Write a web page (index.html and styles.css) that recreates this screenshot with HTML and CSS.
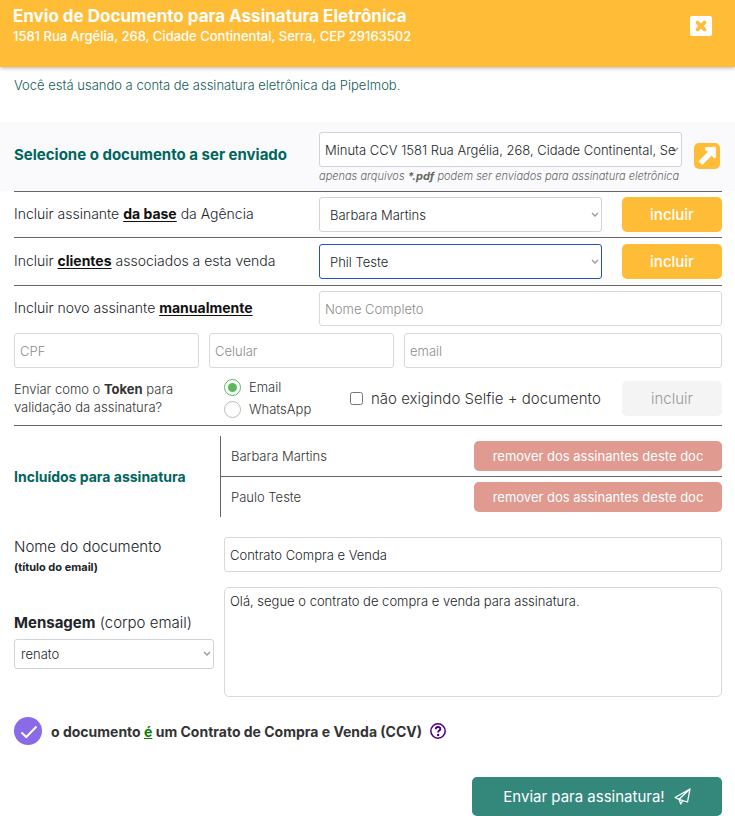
FILE: index.html
```html
<!DOCTYPE html>
<html lang="pt-BR">
<head>
    <meta charset="UTF-8">
    <meta name="viewport" content="width=device-width, initial-scale=1.0">
    <title>Envio de Documento para Assinatura Eletrônica</title>
    <link rel="stylesheet" href="styles.css">
</head>
<body>
    <header class="header">
        <div>
            <h1>Envio de Documento para Assinatura Eletrônica</h1>
            <p>1581 Rua Argélia, 268, Cidade Continental, Serra, CEP 29163502</p>
        </div>
        <button type="button" class="close" aria-label="Fechar">
            <svg width="12" height="12" viewBox="0 0 12 12"><path d="M2.5 2.5l7 7M9.5 2.5l-7 7" stroke="currentColor" stroke-width="3.6" stroke-linecap="round"/></svg>
        </button>
    </header>

    <p class="notice">Você está usando a conta de assinatura eletrônica da PipeImob.</p>

    <form>
        <section class="document">
            <label for="documento" class="heading">Selecione o documento a ser enviado</label>
            <div class="document-field">
                <select id="documento" class="document-select">
                    <option>Minuta CCV 1581 Rua Argélia, 268, Cidade Continental, Serra, CEP 29163502</option>
                </select>
                <p class="hint">apenas arquivos <b>*.pdf</b> podem ser enviados para assinatura eletrônica</p>
            </div>
            <button type="button" class="open" aria-label="Abrir documento">
                <svg width="26" height="26" viewBox="0 0 26 26"><path d="M11.500 4.500L21.700 4.200V14.500L20 15L17.800 12.300L8.200 21.700L4.800 18.300L14.300 8.700L11.300 6.800Z" fill="currentColor" stroke="currentColor" stroke-width=".6" stroke-linejoin="round"/></svg>
            </button>
        </section>

        <section class="row">
            <label for="agencia">Incluir assinante <b class="mark">da base</b> da Agência</label>
            <select id="agencia"><option>Barbara Martins</option></select>
            <button type="button" class="add">incluir</button>
        </section>

        <section class="row row-tall">
            <label for="cliente">Incluir <b class="mark">clientes</b> associados a esta venda</label>
            <select id="cliente" class="active"><option>Phil Teste</option></select>
            <button type="button" class="add">incluir</button>
        </section>

        <section class="manual">
            <div class="manual-name">
                <label for="nome">Incluir novo assinante <b class="mark">manualmente</b></label>
                <input type="text" id="nome" placeholder="Nome Completo">
            </div>
            <div class="manual-data">
                <input type="text" placeholder="CPF" aria-label="CPF">
                <input type="tel" placeholder="Celular" aria-label="Celular">
                <input type="email" placeholder="email" aria-label="email">
            </div>
            <div class="manual-token">
                <p>Enviar como o <b>Token</b> para<br>validação da assinatura?</p>
                <div class="radios">
                    <label><input type="radio" name="token" checked>Email</label>
                    <label><input type="radio" name="token">WhatsApp</label>
                </div>
                <label class="selfie"><input type="checkbox">não exigindo Selfie + documento</label>
                <button type="button" class="add" disabled>incluir</button>
            </div>
        </section>

        <section class="signers">
            <h2 class="heading">Incluídos para assinatura</h2>
            <ul>
                <li>Barbara Martins <button type="button" class="remove">remover dos assinantes deste doc</button></li>
                <li>Paulo Teste <button type="button" class="remove">remover dos assinantes deste doc</button></li>
            </ul>
        </section>

        <section class="message">
            <label for="titulo" class="big">Nome do documento <b class="small">(título do email)</b></label>
            <input type="text" id="titulo" value="Contrato Compra e Venda">
            <div class="message-model">
                <label for="mensagem" class="big"><b>Mensagem</b> (corpo email)</label>
                <select class="model" aria-label="Modelo da mensagem"><option>renato</option></select>
            </div>
            <textarea id="mensagem">Olá, segue o contrato de compra e venda para assinatura.</textarea>
        </section>

        <div class="ccv">
            <input type="checkbox" id="ccv" checked>
            <label for="ccv">o documento <u>é</u> um Contrato de Compra e Venda (CCV)</label>
            <button type="button" class="help" aria-label="Ajuda">
                <svg width="16" height="16" viewBox="0 0 16 16" fill="none" stroke="currentColor"><circle cx="8" cy="8" r="7.200" stroke-width="1.500"/><path d="M5.700 6.300C5.800 3.300 10.500 3.400 10.300 6.100C10.200 7.700 8.100 7.500 8.100 9.400" stroke-width="1.900"/><circle cx="8.100" cy="11.900" r="1.200" fill="currentColor" stroke="none"/></svg>
            </button>
        </div>

        <div class="actions">
            <button type="submit" class="send">Enviar para assinatura!
                <svg width="17" height="17" viewBox="0 0 17 17" fill="none" stroke="currentColor" stroke-width="1.300" stroke-linejoin="round"><path d="M16 1L1 9.500L5 11.300L13.500 14L16 1L5 11.300L6.800 16L8.700 12.500"/></svg>
            </button>
        </div>
    </form>
</body>
</html>
```
FILE: styles.css
```css
* { margin: 0; padding: 0; box-sizing: border-box; }
body { background-color: white; color: #212529; font-family: Inter, "Open Sans", sans-serif; font-size: 14px; font-weight: 300; }
b { font-weight: 700; }
button { border: none; border-radius: 5px; font-family: inherit; cursor: pointer; }
svg { display: block; flex: none; }

input, select, textarea { width: 100%; min-width: 0; height: 35px; padding: 0 5px; border: 1px solid #d9d9d9; border-radius: 3px;
                          background-color: white; color: #212529; font-family: inherit; font-size: 13px; font-weight: 300; }
input::placeholder { color: #8c8c8c; }
select { appearance: none; padding: 0 10px; border-color: #ced4da;
         background-image: url("data:image/svg+xml,%3Csvg xmlns='http://www.w3.org/2000/svg' width='8' height='6'%3E%3Cpath d='M1 1L4 4L7 1' fill='none' stroke='%23999' stroke-width='1.300'/%3E%3C/svg%3E");
         background-repeat: no-repeat; background-position: right 2px center; }
select.active { border-color: #2450c0; }

.header { display: flex; justify-content: space-between; align-items: flex-start; padding: 6px 23px 21px 13px;
          background-color: #ffbc36; color: white; box-shadow: 0 1px 4px rgba(0, 0, 0, 0.3); }
.header h1 { font-size: 17px; line-height: 20px; font-weight: 700; }
.header p { font-size: 13px; line-height: 20px; font-weight: 500; }
.close { display: flex; align-items: center; justify-content: center; width: 22px; height: 20px; margin-top: 10px;
         border-radius: 2px; background-color: white; color: #ffbc36; }
.notice { padding: 8px 14px 27px; color: #125c56; font-size: 13px; line-height: 20px; }

.heading { color: #00665c; font-size: 14px; font-weight: 700; }
.mark { color: #111; text-decoration: underline; text-underline-offset: 2px; }

.document { display: grid; grid-template-columns: 305fr 363fr 40fr; padding: 10px 13px 6px 14px; background-color: #fafafc; }
.document .heading { align-self: center; padding-bottom: 8px; font-size: 15px; }
.document-select { padding: 0 5px; }
.hint { color: #666; font-size: 11px; line-height: 18px; font-style: italic; white-space: nowrap; }
.open { display: flex; align-items: center; justify-content: center; justify-self: end; align-self: center;
        width: 26px; height: 26px; margin: 0 2px 6px 0; background-color: #ffbc36; color: white; }

.row, .manual, .signers { margin: 0 13px 0 14px; border-top: 1px solid #666; }
.row { display: grid; grid-template-columns: 305fr 283fr 120fr; align-items: center; padding: 5px 0; }
.row-tall { padding: 6px 0; }
.row label, .manual-name label { padding-bottom: 2px; }
.add { justify-self: end; width: 100px; height: 35px; background-color: #ffbc36; color: white; font-size: 15px; font-weight: 500; }
.add:disabled { background-color: #f4f4f4; color: #999; font-weight: 300; cursor: default; }

.manual { padding: 5px 0 6px; }
.manual-name { display: grid; grid-template-columns: 305fr 403fr; align-items: center; }
.manual-data { display: grid; grid-template-columns: 185fr 185fr 318fr; gap: 10px; margin-top: 7px; }
.manual-token { display: grid; grid-template-columns: 210fr 126fr 272fr 100px; align-items: center; margin-top: 9px; color: #333; }
.manual-token p { font-size: 13px; line-height: 18px; }
.radios { display: grid; gap: 2px; font-size: 13px; line-height: 20px; }
.radios label, .selfie { display: flex; align-items: center; }
.radios input { appearance: none; width: 17px; height: 17px; margin-right: 8px; padding: 3px; border: 1px solid #bbb; border-radius: 50%; }
.radios input:checked { border-color: #5cb85c; background: #5cb85c content-box; }
.selfie { gap: 8px; font-size: 15px; white-space: nowrap; }
.selfie input { width: 13px; height: 13px; }

.signers { display: grid; grid-template-columns: 206fr 502fr; align-items: center; padding: 10px 0; }
.signers ul { border-left: 1px solid #666; list-style: none; }
.signers li { display: flex; justify-content: space-between; align-items: center; padding: 5px 0 5px 10px; font-size: 13px; color: #333; }
.signers li + li { border-top: 1px solid #666; }
.remove { width: 248px; height: 30px; background-color: #e19a90; color: white; font-size: 13px; font-weight: 400; }

.message { display: grid; grid-template-columns: 200fr 498fr; gap: 10px; padding: 10px 13px 0 14px; }
.big { font-size: 15px; line-height: 20px; }
.small { display: block; font-size: 11px; }
.message-model { display: grid; gap: 6px; align-self: center; padding-top: 26px; margin-bottom: 28px; }
.message .model { height: 30px; padding: 0 6px; }
textarea { display: block; height: 110px; padding: 5px; border-radius: 5px; resize: none; line-height: 17px; }

.ccv { display: flex; align-items: center; padding: 20px 14px 32px; color: #333; font-size: 14px; font-weight: 700; }
.ccv input { appearance: none; flex: none; width: 28px; height: 28px; margin-right: 9px; border: none; border-radius: 50%; background-color: #8b6ae8;
             background-image: url("data:image/svg+xml,%3Csvg xmlns='http://www.w3.org/2000/svg' width='28' height='28'%3E%3Cpath d='M7.500 15.500L12.300 20L22.500 9.500' fill='none' stroke='white' stroke-width='2'/%3E%3C/svg%3E"); }
.ccv u { color: #008000; }
.help { margin-left: 8px; background: none; color: #4b0082; }

.actions { display: flex; justify-content: flex-end; padding-right: 13px; }
.send { display: flex; align-items: center; justify-content: center; gap: 9px; width: 250px; height: 39px; background-color: #34877b;
        color: white; font-size: 15px; font-weight: 400; }
```
